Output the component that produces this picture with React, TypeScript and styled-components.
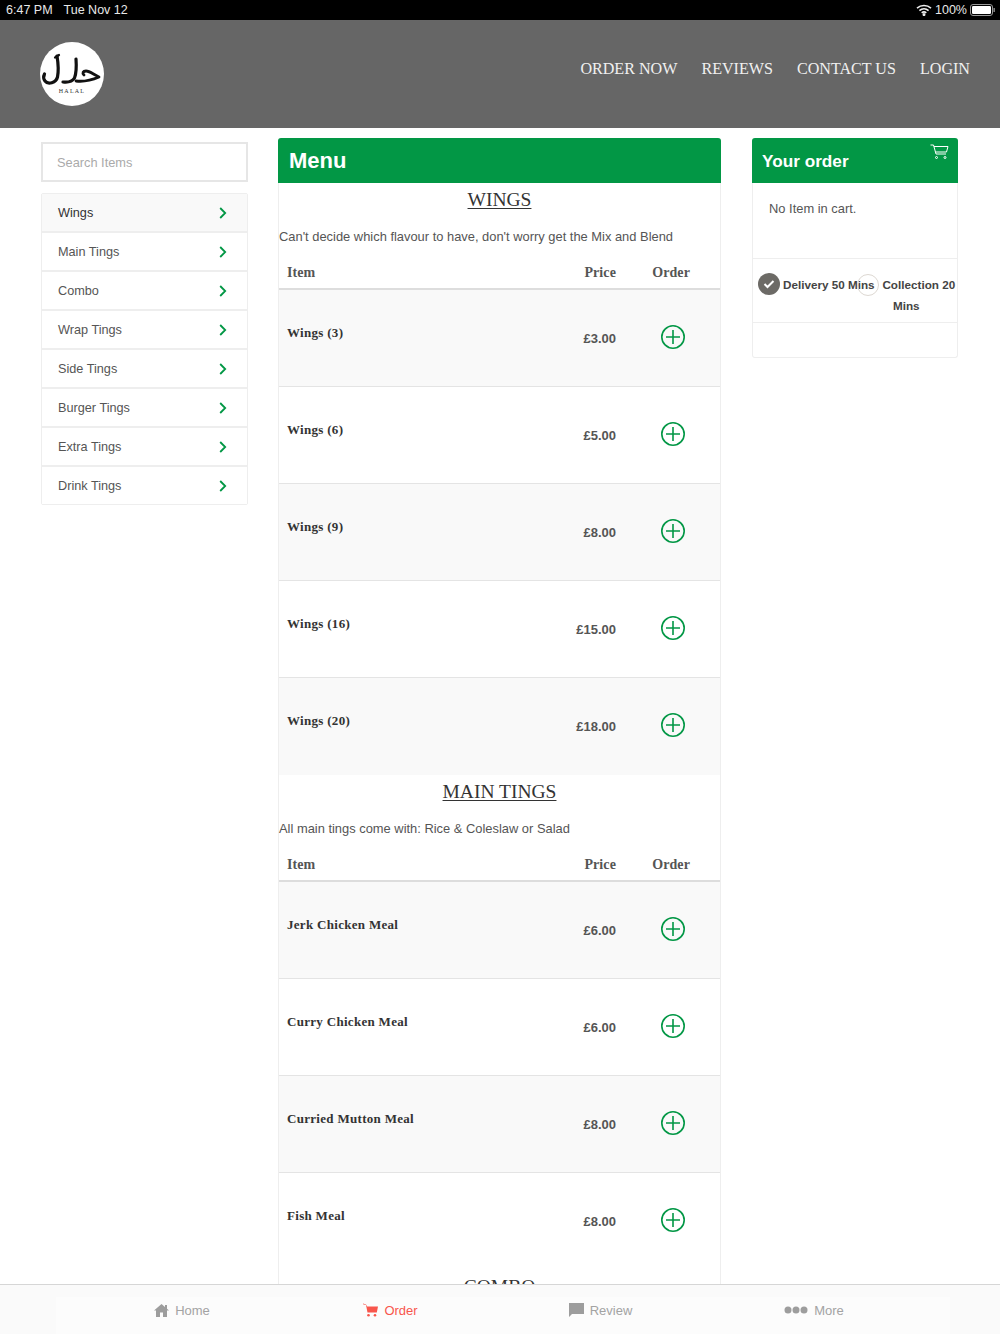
import React from "react";
import styled, { createGlobalStyle } from "styled-components";

const Global = createGlobalStyle`
  html, body { margin: 0; padding: 0; height: 1334px; overflow: hidden; background: #fff; }
  body { font-family: "Liberation Sans", Arial, sans-serif; color: #555; }
  * { box-sizing: border-box; }
`;
const SERIF = `"Liberation Serif", "Times New Roman", serif`;
const GREEN = "#029745";

const Page = styled.div`
  width: 1000px; height: 1334px; overflow: hidden; position: relative;
`;
const StatusBar = styled.div`
  height: 20px; background: #000; color: #e8e8e8; font-size: 12.5px; display: flex;
  align-items: center; justify-content: space-between; padding: 0 5px 0 6px;
`;
const StatusLeft = styled.div`display: flex; gap: 11px;`;
const StatusRight = styled.div`display: flex; align-items: center; gap: 3px;`;
const Header = styled.header`
  height: 108px; background: #666; display: flex; align-items: flex-start;
  justify-content: space-between; padding: 22px 30px 0 40px;
`;
const Logo = styled.div`
  width: 64px; height: 64px; border-radius: 50%; background: #fff; display: flex;
  flex-direction: column; align-items: center; padding-top: 10px;
`;
const LogoText = styled.span`
  font-family: ${SERIF}; font-size: 6px; line-height: 8px; letter-spacing: 1.2px; color: #333; margin-top: 1px;
`;
const Nav = styled.nav`display: flex; gap: 24px; padding-top: 17px;`;
const NavLink = styled.a`
  font-family: ${SERIF}; font-size: 16.1px; line-height: 20px; color: #f0f0f0; white-space: nowrap;
`;
const Columns = styled.div`
  display: grid; grid-template-columns: 207px 443px 207px; column-gap: 30px;
  padding: 10px 0 0 41px; align-items: start;
  & > :nth-child(3) { margin-left: 1px; }
`;
const Search = styled.div`
  height: 40px; border: 2px solid #e6e6e6; margin-top: 4px; padding: 0 14px; display: flex;
  align-items: center; font-size: 12.8px; color: #aaa; background: #fff;
`;
const Categories = styled.ul`
  list-style: none; margin: 11px 0 0; padding: 0; border: 1px solid #eee; border-radius: 2px;
`;
const Category = styled.li<{ $active?: boolean }>`
  height: 39px; display: flex; align-items: center; justify-content: space-between;
  padding: 0 20px 0 16px; font-size: 12.7px; color: ${p => (p.$active ? "#333" : "#555")};
  background: ${p => (p.$active ? "#f9f9f9" : "#fff")};
  border-bottom: 2px solid #eee;
  &:last-child { border-bottom: 0; height: 37px; }
`;
const Card = styled.section`
  border: 1px solid #eee; border-top: 0; border-radius: 3px;
`;
const MenuBar = styled.div`
  height: 45px; background: ${GREEN}; color: #fff; font-weight: 700; font-size: 22px;
  display: flex; align-items: center; padding: 0 11px; margin: 0 -1px; border-radius: 3px 3px 0 0;
`;
const MenuCard = styled(Card)`height: 1200px;`;
const SectionTitle = styled.h2`
  font-family: ${SERIF}; font-weight: 400; font-size: 19.5px; line-height: 24px; color: #333;
  text-decoration: underline; text-decoration-thickness: 1px; text-underline-offset: 2px;
  text-align: center; margin: 5px 0 0;
`;
const Blurb = styled.p`
  margin: 16px 0 0; font-size: 12.9px; line-height: 18px; color: #555; white-space: nowrap;
`;
const TableRow = styled.div`
  display: grid; grid-template-columns: 1fr 74px 74px; padding: 0 30px 0 8px;
`;
const TableHead = styled(TableRow)`
  margin-top: 18px; height: 26px; border-bottom: 2px solid #ddd; font-family: ${SERIF};
  font-weight: 700; font-size: 14px; line-height: 17px; color: #555; letter-spacing: .1px;
  padding-right: 0; grid-template-columns: 1fr 74px 74px 30px;
`;
const HeadCell = styled.span`text-align: right;`;
const Item = styled(TableRow)<{ $odd: boolean; $last: boolean }>`
  height: 97px; background: ${p => (p.$odd ? "#f9f9f9" : "#fff")};
  border-bottom: ${p => (p.$last ? "0" : "1px solid #e4e4e4")};
`;
const ItemName = styled.div`
  font-family: ${SERIF}; font-weight: 700; font-size: 13px; line-height: 17px; color: #333;
  letter-spacing: .3px; padding-top: 34px; white-space: nowrap;
`;
const ItemPrice = styled.div`
  font-size: 13px; font-weight: 700; color: #555; text-align: right; padding-top: 40px; line-height: 17px;
`;
const AddCell = styled.div`
  padding: 34px 4px 0 0; display: flex; justify-content: flex-end;
`;
const OrderBar = styled(MenuBar)`
  font-size: 17.2px; position: relative; padding: 2px 10px 0;
`;
const CartIcon = styled.div`position: absolute; right: 9px; top: 6px;`;
const EmptyCart = styled.div`
  height: 76px; padding: 18px 16px; font-size: 12.9px; line-height: 16px; color: #555;
  border-bottom: 1px solid #eee;
`;
const TimeOptions = styled.div`
  height: 64px; border-bottom: 1px solid #eee; display: flex; padding: 15px 0 0 5px;
  font-size: 11.7px; font-weight: 700; color: #444; line-height: 21px;
`;
const DeliveryOption = styled.div`display: flex; align-items: flex-start; flex: none;`;
const DeliveryLabel = styled.span`white-space: nowrap; margin-left: 3px;`;
const CollectionOption = styled.div`
  flex: 1; text-align: center; margin-left: -19px; min-width: 0; position: relative;
`;
const Radio = styled.span`
  display: inline-block; width: 22px; height: 22px; border-radius: 50%; vertical-align: middle;
  border: 1px solid #ddd8d2; margin: -4px 3px -2px 0;
`;
const Checked = styled.span`
  width: 22px; height: 22px; border-radius: 50%; background: #6c6a66; flex: none; margin-top: -1px;
  display: flex; align-items: center; justify-content: center;
`;
const Footer = styled.div`height: 34px;`;
const TabBar = styled.nav`
  position: absolute; left: 0; right: 0; bottom: 0; height: 50px; background: #fafafa;
  border-top: 1px solid #d6d6d6; display: grid; grid-template-columns: 208px 209px 211px 216px;
  padding-left: 78px;
  &::before {
    content: ""; position: absolute; left: 56px; right: 50px; top: 12px; bottom: 0; background: #fcfcfc;
  }
`;
const Tab = styled.a<{ $active?: boolean }>`
  display: flex; align-items: center; justify-content: center; gap: 6px; font-size: 13px; padding-top: 1px;
  position: relative;
  color: ${p => (p.$active ? "#f8564c" : "#a3a3a3")};
`;

const Chevron = () => (
  <svg width="8" height="12" viewBox="0 0 8 12" fill="none" stroke={GREEN} strokeWidth="1.8">
    <path d="M1.2 1l5 5-5 5" />
  </svg>
);
const Plus = () => (
  <svg width="26" height="26" viewBox="0 0 26 26" fill="none" stroke={GREEN} strokeWidth="1.6">
    <circle cx="13" cy="13" r="11.2" />
    <path d="M13 6v14M6 13h14" />
  </svg>
);

const wings = [["Wings (3)", "£3.00"], ["Wings (6)", "£5.00"], ["Wings (9)", "£8.00"], ["Wings (16)", "£15.00"], ["Wings (20)", "£18.00"]];
const mains = [["Jerk Chicken Meal", "£6.00"], ["Curry Chicken Meal", "£6.00"], ["Curried Mutton Meal", "£8.00"], ["Fish Meal", "£8.00"]];
const cats = ["Wings", "Main Tings", "Combo", "Wrap Tings", "Side Tings", "Burger Tings", "Extra Tings", "Drink Tings"];

const Section = ({ title, blurb, items }: { title: string; blurb: string; items: string[][] }) => (
  <>
    <SectionTitle>{title}</SectionTitle>
    <Blurb>{blurb}</Blurb>
    <TableHead>
      <span>Item</span>
      <HeadCell>Price</HeadCell>
      <HeadCell>Order</HeadCell>
    </TableHead>
    {items.map(([n, p], i) => (
      <Item key={n} $odd={i % 2 === 0} $last={i === items.length - 1}>
        <ItemName>{n}</ItemName>
        <ItemPrice>{p}</ItemPrice>
        <AddCell><Plus /></AddCell>
      </Item>
    ))}
  </>
);

export default function App() {
  return (
    <Page>
      <Global />
      <StatusBar>
        <StatusLeft><span>6:47 PM</span><span>Tue Nov 12</span></StatusLeft>
        <StatusRight>
          <svg width="16" height="12" viewBox="0 0 16 12" fill="none" stroke="#eee" strokeWidth="1.6">
            <path d="M1 4.2c4-3.6 10-3.6 14 0M3.4 6.6c2.7-2.4 6.5-2.4 9.2 0M5.7 8.9c1.3-1.1 3.3-1.1 4.6 0" />
            <circle cx="8" cy="10.6" r=".7" fill="#eee" />
          </svg>
          <span>100%</span>
          <svg width="25" height="12" viewBox="0 0 25 12">
            <rect x=".5" y=".5" width="22" height="11" rx="2.5" fill="none" stroke="#999" />
            <rect x="2" y="2" width="19" height="8" rx="1.2" fill="#fff" />
            <rect x="23.5" y="4" width="1.3" height="4" fill="#999" />
          </svg>
        </StatusRight>
      </StatusBar>
      <Header>
        <Logo>
          <svg width="64" height="34" viewBox="0 10 64 34" fill="none" stroke="#111" strokeLinecap="round" strokeLinejoin="round">
            <path d="M17 14C18 20 18.5 30 17.5 35C16 41 8 43 5 39C3.5 37 3.5 34 4.5 32" strokeWidth="3.2" />
            <path d="M15 15.5L19 13" strokeWidth="2.2" />
            <path d="M36 17C36.5 24 36 32 34.5 36C32 40 27 40.5 23 40" strokeWidth="3.2" />
            <path d="M36 39C44 40 52 38 59 35C54 33 50 29 46 29C43 29 42 31 44 33" strokeWidth="2.8" />
          </svg>
          <LogoText>HALAL</LogoText>
        </Logo>
        <Nav>
          <NavLink>ORDER NOW</NavLink>
          <NavLink>REVIEWS</NavLink>
          <NavLink>CONTACT US</NavLink>
          <NavLink>LOGIN</NavLink>
        </Nav>
      </Header>
      <Columns>
        <aside>
          <Search>Search Items</Search>
          <Categories>
            {cats.map((c, i) => (
              <Category key={c} $active={i === 0}>{c}<Chevron /></Category>
            ))}
          </Categories>
        </aside>
        <MenuCard>
          <MenuBar>Menu</MenuBar>
          <Section title="WINGS" blurb="Can't decide which flavour to have, don't worry get the Mix and Blend" items={wings} />
          <Section title="MAIN TINGS" blurb="All main tings come with: Rice &amp; Coleslaw or Salad" items={mains} />
          <SectionTitle>COMBO</SectionTitle>
        </MenuCard>
        <Card>
          <OrderBar>
            Your order
            <CartIcon>
              <svg width="19" height="16" viewBox="0 0 19 16" fill="none" stroke="#fff" strokeWidth="1">
                <path d="M.5 1h3l2.5 9h10M4 2.5h14l-1.500 5.500H5.500" />
                <circle cx="6.5" cy="13.5" r="1" />
                <circle cx="15" cy="13.5" r="1" />
              </svg>
            </CartIcon>
          </OrderBar>
          <EmptyCart>No Item in cart.</EmptyCart>
          <TimeOptions>
            <DeliveryOption>
              <Checked>
                <svg width="12" height="10" viewBox="0 0 12 10" fill="none" stroke="#fff" strokeWidth="2">
                  <path d="M1.5 5l3 3 6-6" />
                </svg>
              </Checked>
              <DeliveryLabel>Delivery 50 Mins</DeliveryLabel>
            </DeliveryOption>
            <CollectionOption>
              <Radio />
              Collection 20 Mins
            </CollectionOption>
          </TimeOptions>
          <Footer />
        </Card>
      </Columns>
      <TabBar>
        <Tab>
          <svg width="15" height="13" viewBox="0 0 15 13" fill="#9d9d9d"><path d="M7.5 0L0 6.5h2V13h4V8.5h3V13h4V6.5h2l-2-1.8V1h-2v1.9z" /></svg>
          Home
        </Tab>
        <Tab $active>
          <svg width="15" height="14" viewBox="0 0 15 14" fill="#f8564c">
            <path d="M0 .5l3 1 1.2 2H15l-1.200 6H4.500L3 2 0 1.200z" />
            <circle cx="5.5" cy="12.3" r="1.3" /><circle cx="12" cy="12.3" r="1.3" />
          </svg>
          Order
        </Tab>
        <Tab>
          <svg width="15" height="14" viewBox="0 0 15 14" fill="#9d9d9d"><path d="M0 0h15v11H3l-3 3z" /></svg>
          Review
        </Tab>
        <Tab>
          <svg width="24" height="8" viewBox="0 0 24 8" fill="#9d9d9d"><circle cx="4" cy="4" r="3.5" /><circle cx="12" cy="4" r="3.5" /><circle cx="20" cy="4" r="3.5" /></svg>
          More
        </Tab>
      </TabBar>
    </Page>
  );
}
